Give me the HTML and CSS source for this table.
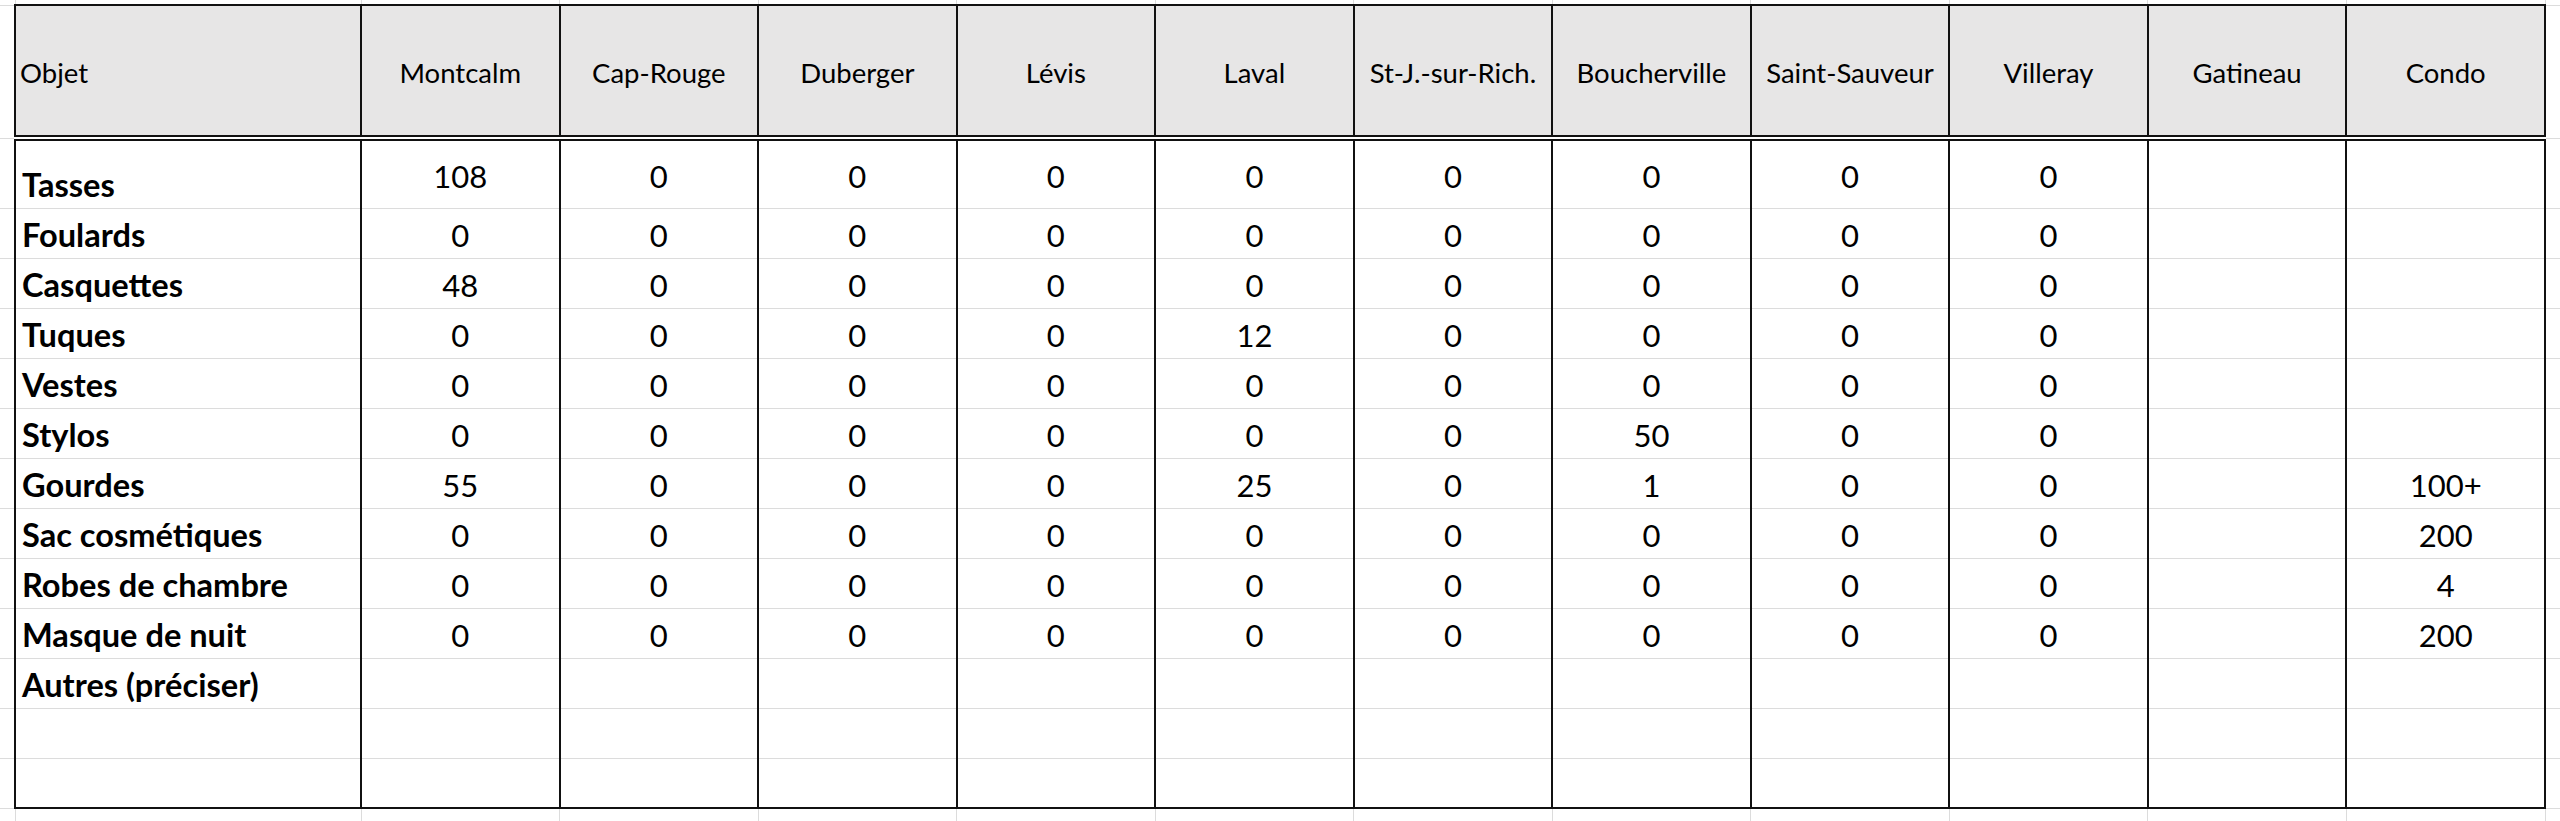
FILE: index.html
```html
<!DOCTYPE html>
<html lang="fr">
<head>
<meta charset="utf-8">
<title>Inventaire</title>
<link rel="stylesheet" href="styles.css">
</head>
<body>
<table class="sheet">
  <colgroup>
    <col class="c-edge">
    <col class="c-obj">
    <col><col><col><col><col><col><col><col><col><col><col>
    <col class="c-edge">
  </colgroup>
  <tr class="r-top">
    <td class="pad"></td><td class="pad"></td><td class="pad"></td><td class="pad"></td><td class="pad"></td><td class="pad"></td><td class="pad"></td><td class="pad"></td><td class="pad"></td><td class="pad"></td><td class="pad"></td><td class="pad"></td><td class="pad"></td><td class="pad"></td>
  </tr>
  <tr class="r-head">
    <td class="pad"></td>
    <th class="hd hd-obj">Objet</th>
    <th class="hd">Montcalm</th>
    <th class="hd">Cap-Rouge</th>
    <th class="hd">Duberger</th>
    <th class="hd">Lévis</th>
    <th class="hd">Laval</th>
    <th class="hd">St-J.-sur-Rich.</th>
    <th class="hd">Boucherville</th>
    <th class="hd">Saint-Sauveur</th>
    <th class="hd">Villeray</th>
    <th class="hd">Gatineau</th>
    <th class="hd">Condo</th>
    <td class="pad"></td>
  </tr>
  <tr class="r-first">
    <td class="pad"></td>
    <td class="lbl">Tasses</td>
    <td class="num">108</td><td class="num">0</td><td class="num">0</td><td class="num">0</td><td class="num">0</td><td class="num">0</td><td class="num">0</td><td class="num">0</td><td class="num">0</td><td class="num"></td><td class="num"></td>
    <td class="pad"></td>
  </tr>
  <tr class="r-row">
    <td class="pad"></td>
    <td class="lbl">Foulards</td>
    <td class="num">0</td><td class="num">0</td><td class="num">0</td><td class="num">0</td><td class="num">0</td><td class="num">0</td><td class="num">0</td><td class="num">0</td><td class="num">0</td><td class="num"></td><td class="num"></td>
    <td class="pad"></td>
  </tr>
  <tr class="r-row">
    <td class="pad"></td>
    <td class="lbl">Casquettes</td>
    <td class="num">48</td><td class="num">0</td><td class="num">0</td><td class="num">0</td><td class="num">0</td><td class="num">0</td><td class="num">0</td><td class="num">0</td><td class="num">0</td><td class="num"></td><td class="num"></td>
    <td class="pad"></td>
  </tr>
  <tr class="r-row">
    <td class="pad"></td>
    <td class="lbl">Tuques</td>
    <td class="num">0</td><td class="num">0</td><td class="num">0</td><td class="num">0</td><td class="num">12</td><td class="num">0</td><td class="num">0</td><td class="num">0</td><td class="num">0</td><td class="num"></td><td class="num"></td>
    <td class="pad"></td>
  </tr>
  <tr class="r-row">
    <td class="pad"></td>
    <td class="lbl">Vestes</td>
    <td class="num">0</td><td class="num">0</td><td class="num">0</td><td class="num">0</td><td class="num">0</td><td class="num">0</td><td class="num">0</td><td class="num">0</td><td class="num">0</td><td class="num"></td><td class="num"></td>
    <td class="pad"></td>
  </tr>
  <tr class="r-row">
    <td class="pad"></td>
    <td class="lbl">Stylos</td>
    <td class="num">0</td><td class="num">0</td><td class="num">0</td><td class="num">0</td><td class="num">0</td><td class="num">0</td><td class="num">50</td><td class="num">0</td><td class="num">0</td><td class="num"></td><td class="num"></td>
    <td class="pad"></td>
  </tr>
  <tr class="r-row">
    <td class="pad"></td>
    <td class="lbl">Gourdes</td>
    <td class="num">55</td><td class="num">0</td><td class="num">0</td><td class="num">0</td><td class="num">25</td><td class="num">0</td><td class="num">1</td><td class="num">0</td><td class="num">0</td><td class="num"></td><td class="num">100+</td>
    <td class="pad"></td>
  </tr>
  <tr class="r-row">
    <td class="pad"></td>
    <td class="lbl">Sac cosmétiques</td>
    <td class="num">0</td><td class="num">0</td><td class="num">0</td><td class="num">0</td><td class="num">0</td><td class="num">0</td><td class="num">0</td><td class="num">0</td><td class="num">0</td><td class="num"></td><td class="num">200</td>
    <td class="pad"></td>
  </tr>
  <tr class="r-row">
    <td class="pad"></td>
    <td class="lbl">Robes de chambre</td>
    <td class="num">0</td><td class="num">0</td><td class="num">0</td><td class="num">0</td><td class="num">0</td><td class="num">0</td><td class="num">0</td><td class="num">0</td><td class="num">0</td><td class="num"></td><td class="num">4</td>
    <td class="pad"></td>
  </tr>
  <tr class="r-row">
    <td class="pad"></td>
    <td class="lbl">Masque de nuit</td>
    <td class="num">0</td><td class="num">0</td><td class="num">0</td><td class="num">0</td><td class="num">0</td><td class="num">0</td><td class="num">0</td><td class="num">0</td><td class="num">0</td><td class="num"></td><td class="num">200</td>
    <td class="pad"></td>
  </tr>
  <tr class="r-row">
    <td class="pad"></td>
    <td class="lbl">Autres (préciser)</td>
    <td class="num"></td><td class="num"></td><td class="num"></td><td class="num"></td><td class="num"></td><td class="num"></td><td class="num"></td><td class="num"></td><td class="num"></td><td class="num"></td><td class="num"></td>
    <td class="pad"></td>
  </tr>
  <tr class="r-row">
    <td class="pad"></td>
    <td class="lbl"></td>
    <td class="num"></td><td class="num"></td><td class="num"></td><td class="num"></td><td class="num"></td><td class="num"></td><td class="num"></td><td class="num"></td><td class="num"></td><td class="num"></td><td class="num"></td>
    <td class="pad"></td>
  </tr>
  <tr class="r-row r-last">
    <td class="pad"></td>
    <td class="lbl"></td>
    <td class="num"></td><td class="num"></td><td class="num"></td><td class="num"></td><td class="num"></td><td class="num"></td><td class="num"></td><td class="num"></td><td class="num"></td><td class="num"></td><td class="num"></td>
    <td class="pad"></td>
  </tr>
  <tr class="r-bottom">
    <td class="pad"></td><td class="pad"></td><td class="pad"></td><td class="pad"></td><td class="pad"></td><td class="pad"></td><td class="pad"></td><td class="pad"></td><td class="pad"></td><td class="pad"></td><td class="pad"></td><td class="pad"></td><td class="pad"></td><td class="pad"></td>
  </tr>
</table>
</body>
</html>
```

FILE: styles.css
```css
html, body {
  margin: 0;
  padding: 0;
  background: #ffffff;
  overflow: hidden;
}

body {
  width: 2560px;
  height: 821px;
  font-family: "Lato", "Liberation Sans", sans-serif;
  color: #000;
}

.sheet {
  width: 2560px;
  table-layout: fixed;
  border-collapse: collapse;
  border-spacing: 0;
}

.c-edge { width: 15px; }
.c-obj { width: 346px; }

/* light spreadsheet gridlines */
.sheet .pad,
.sheet .hd,
.sheet .lbl,
.sheet .num {
  border: 1px solid #dcdcdc;
  padding: 0;
  overflow: hidden;
  white-space: nowrap;
}

/* outer edges of the visible sheet area carry no gridline */
.sheet .r-top .pad { border-top: none; }
.sheet .r-bottom .pad { border-bottom: none; }
.sheet tr > .pad:first-child { border-left: none; }
.sheet tr > .pad:last-child { border-right: none; }

.r-top { height: 5px; }
.r-head { height: 133px; }
.r-first { height: 70px; }
.r-row { height: 50px; }
.r-bottom { height: 13px; }

/* header */
.sheet .hd {
  background: #e7e6e6;
  font-weight: 400;
  font-size: 27.5px;
  text-align: center;
  vertical-align: middle;
  padding-top: 4px;
  border-top: 2px solid #111;
  border-bottom: 6px double #111;
  border-left: 2px solid #111;
  border-right: 2px solid #111;
}

.sheet .hd-obj {
  text-align: left;
  padding-left: 4px;
}

/* body cells */
.sheet .lbl {
  font-weight: 700;
  font-size: 32.6px;
  line-height: 38px;
  text-align: left;
  vertical-align: bottom;
  padding-left: 6px;
  padding-bottom: 4px;
  border-left: 2px solid #111;
  border-right: 2px solid #111;
}

.sheet .num {
  font-size: 31px;
  line-height: 37px;
  text-align: center;
  vertical-align: middle;
  padding-top: 4px;
  border-left: 2px solid #111;
  border-right: 2px solid #111;
}

.sheet .r-last .lbl,
.sheet .r-last .num {
  border-bottom: 2px solid #111;
}
```
